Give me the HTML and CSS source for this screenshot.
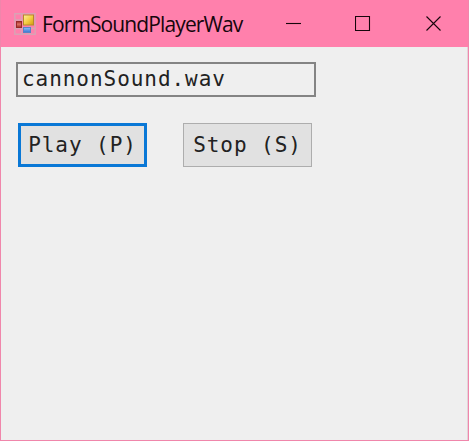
FILE: index.html
```html
<!DOCTYPE html>
<html lang="en">
<head>
<meta charset="utf-8">
<title>FormSoundPlayerWav</title>
<link rel="stylesheet" href="styles.css">
</head>
<body>
<div class="window">
  <header class="titlebar">
    <svg class="app-icon" width="22" height="22" viewBox="0 0 22 22">
      <defs>
        <linearGradient id="gold" x1="0" y1="0" x2="1" y2="1"><stop offset="0" stop-color="#fff0a0"/><stop offset=".5" stop-color="#f5ce45"/><stop offset="1" stop-color="#d29b0c"/></linearGradient>
        <linearGradient id="red" x1="0" y1="0" x2="0" y2="1"><stop offset="0" stop-color="#a52822"/><stop offset=".45" stop-color="#dc7265"/><stop offset="1" stop-color="#a32b22"/></linearGradient>
        <linearGradient id="blue" x1="0" y1="0" x2="0" y2="1"><stop offset="0" stop-color="#8cc0fa"/><stop offset="1" stop-color="#3773d0"/></linearGradient>
      </defs>
      <path d="M.8.8h20.4v20.4H.8zM7.5.8v20.4M.8 7h8M.8 15.5h20M15.5 13v8" fill="none" stroke="#d9a3b4" stroke-width="1.4"/>
      <rect x="9.5" y="2" width="10" height="10" fill="url(#gold)" stroke="#b58b2a"/>
      <rect x="2.5" y="8.5" width="5" height="6" fill="url(#red)" stroke="#962b28"/>
      <rect x="9.5" y="14.5" width="7" height="5" fill="url(#blue)" stroke="#5a83c4"/>
    </svg>
    <h1 class="title">FormSoundPlayerWav</h1>
    <div class="controls">
      <svg class="control" width="16" height="16" viewBox="0 0 16 16"><path d="M0 7.5h15"/></svg>
      <svg class="control" width="16" height="16" viewBox="0 0 16 16"><path d="M.5.5h14v14H.5z"/></svg>
      <svg class="control" width="16" height="16" viewBox="0 0 16 16"><path d="M.5.5l14 14M14.5.5l-14 14"/></svg>
    </div>
  </header>
  <main class="client">
    <input class="file" type="text" value="cannonSound.wav" aria-label="Sound file">
    <div class="buttons">
      <button class="button button-default">Play (P)</button>
      <button class="button">Stop (S)</button>
    </div>
  </main>
</div>
</body>
</html>
```
FILE: styles.css
```css
* { box-sizing: border-box; }
body { margin: 0; }
.window {
  width: 469px;
  height: 441px;
  display: flex;
  flex-direction: column;
  overflow: hidden;
  background: #efefef;
  border: 1px solid #f086ab;
  border-top: 0;
}
.titlebar {
  height: 47px;
  flex: none;
  display: flex;
  align-items: center;
  padding: 0 27px 0 14px;
  margin: 0 -1px;
  background: #ff80ac;
}
.app-icon { flex: none; }
.title {
  margin: 1px 0 0 6px;
  font: 400 21px/30px "Open Sans", "Noto Sans", sans-serif;
  letter-spacing: -0.88px;
  color: #16060c;
  white-space: nowrap;
}
.controls {
  margin-left: auto;
  display: grid;
  grid-template-columns: 69px 71px 16px;
}
.control {
  fill: none;
  stroke: #16060c;
  stroke-width: 1.1;
}
.client {
  flex: 1;
  padding: 15px 0 0 15px;
  border-right: 1px solid #e3d3d9;
}
.file, .button {
  display: block;
  font: 21px/24px "DejaVu Sans Mono", monospace;
  letter-spacing: 0.95px;
  color: #222;
}
.file {
  width: 300px;
  height: 35px;
  padding: 0 0 2px 4px;
  border: 2px solid #848484;
  border-radius: 0;
  background: #efefef;
  outline: 0;
}
.buttons {
  display: flex;
  gap: 36px;
  margin: 26px 0 0 2px;
}
.button {
  width: 129px;
  height: 44px;
  padding: 0;
  border: 1px solid #adadad;
  border-radius: 0;
  background: #e1e1e1;
  white-space: nowrap;
}
.button-default { border: 3px solid #0a78d6; }
```
